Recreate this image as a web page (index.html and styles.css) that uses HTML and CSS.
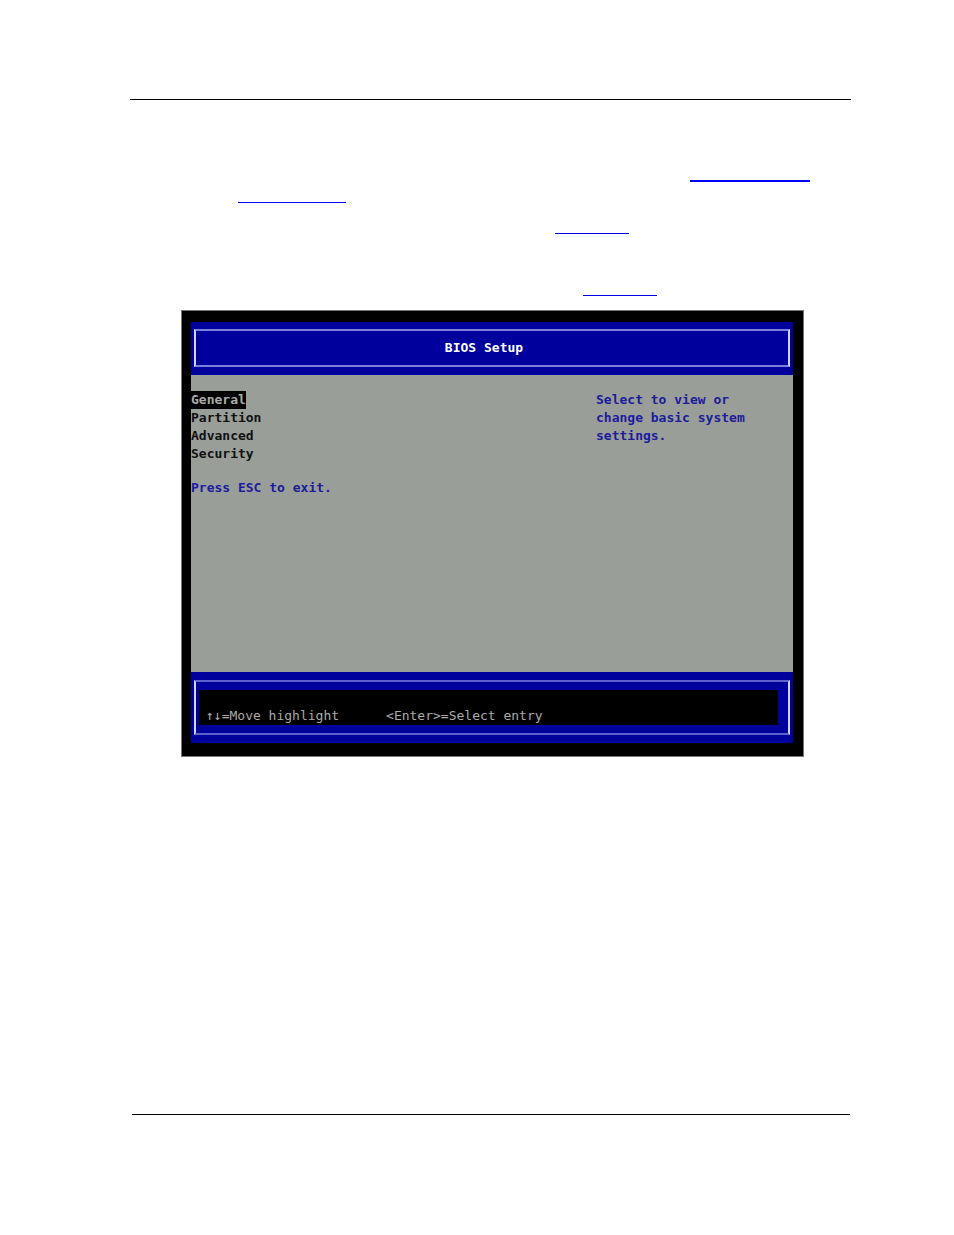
FILE: index.html
```
<!DOCTYPE html>
<html lang="en">
<head>
    <meta charset="UTF-8">
    <meta name="viewport" content="width=device-width, initial-scale=1.0">
    <title>BIOS Setup</title>
    <link rel="stylesheet" href="styles.css">
</head>
<body>
    <header class="page-header"></header>

    <main>
        <section class="links">
            <p class="row row-end"><a href="#setup" class="link link-long" aria-label="BIOS Setup"></a></p>
            <p class="row"><a href="#setup" class="link link-medium" aria-label="BIOS Setup, continued"></a></p>
            <p class="row row-figure"><a href="#setup" class="link link-figure" aria-label="Figure"></a></p>
            <p class="row row-last"><a href="#setup" class="link link-figure" aria-label="Setup screen figure"></a></p>
        </section>

        <section class="screen" id="setup">
            <div class="title-bar">
                <h1>BIOS Setup</h1>
            </div>

            <div class="content">
                <nav class="menu">
                    <button type="button" class="selected">General</button>
                    <button type="button">Partition</button>
                    <button type="button">Advanced</button>
                    <button type="button">Security</button>
                    <p>Press ESC to exit.</p>
                </nav>
                <p class="help">Select to view or change basic system settings.</p>
            </div>

            <div class="key-bar">
                <div class="key-frame">
                    <div class="keys">
                        <span>↑↓=Move highlight</span>
                        <span>&lt;Enter&gt;=Select entry</span>
                    </div>
                </div>
            </div>
        </section>
    </main>

    <footer class="page-footer"></footer>
</body>
</html>
```
FILE: styles.css
```
* {
    box-sizing: border-box;
}

body {
    margin: 0;
    min-height: 100vh;
    display: flex;
    flex-direction: column;
    background-color: white;
}

p, h1 {
    margin: 0;
}

.page-header {
    height: 100px;
    margin: 0 103px 0 130px;
    border-bottom: 1px solid black;
}

.page-footer {
    height: 121px;
    margin: auto 104px 0 132px;
    border-top: 1px solid black;
}

main {
    padding: 61px 150px 40px 181px;
}

/* cross references */

.links {
    padding-left: 57px;
}

.row {
    display: flex;
    height: 21px;
    margin-right: -6px;
}

.row-end {
    justify-content: flex-end;
}

.row-figure {
    height: 31px;
    padding-left: 317px;
}

.row-last {
    height: 62px;
    padding-left: 345px;
}

.link {
    border-bottom: 1px solid #0000e0;
}

.link-long {
    width: 120px;
    border-bottom: 2px solid blue;
}

.link-medium {
    width: 108px;
    border-color: blue;
}

.link-figure {
    width: 74px;
}

/* setup screen */

.screen {
    margin-top: 14px;
    padding: 11px 10px 13px 9px;
    border: 1px solid #777;
    background-color: black;
    font-family: "DejaVu Sans Mono", "Liberation Mono", monospace;
    font-size: 13px;
    line-height: 18px;
}

.title-bar {
    padding: 7px 3px 8px;
    background-color: #00009c;
}

.title-bar h1 {
    padding: 8px 16px 8px 0;
    border: 2px solid #d4d4f8;
    border-top-color: #8080dc;
    border-bottom-color: #8080dc;
    color: white;
    font-size: 13px;
    text-align: center;
}

.content {
    display: flex;
    justify-content: space-between;
    min-height: 297px;
    padding-top: 16px;
    background-color: #9a9e98;
}

.menu {
    display: flex;
    flex-direction: column;
    align-items: flex-start;
}

.menu button {
    padding: 0;
    border: none;
    background: none;
    color: #111;
    font: inherit;
    font-weight: bold;
    cursor: pointer;
}

.menu button.selected {
    background-color: black;
    color: #aaa;
}

.menu p {
    margin-top: 16px;
    color: #1c1c9c;
    font-weight: bold;
}

.help {
    width: 160px;
    margin-right: 37px;
    color: #1c1c9c;
    font-weight: bold;
}

.key-bar {
    padding: 8px 3px;
    background-color: #00009c;
}

.key-frame {
    padding: 8px 10px 8px 3px;
    border: 2px solid #d4d4f8;
    border-top-color: #6060cc;
    border-bottom-color: #6060cc;
}

.keys {
    display: flex;
    gap: 47px;
    padding: 17px 7px 0;
    background-color: black;
    color: #aaa;
}
```
